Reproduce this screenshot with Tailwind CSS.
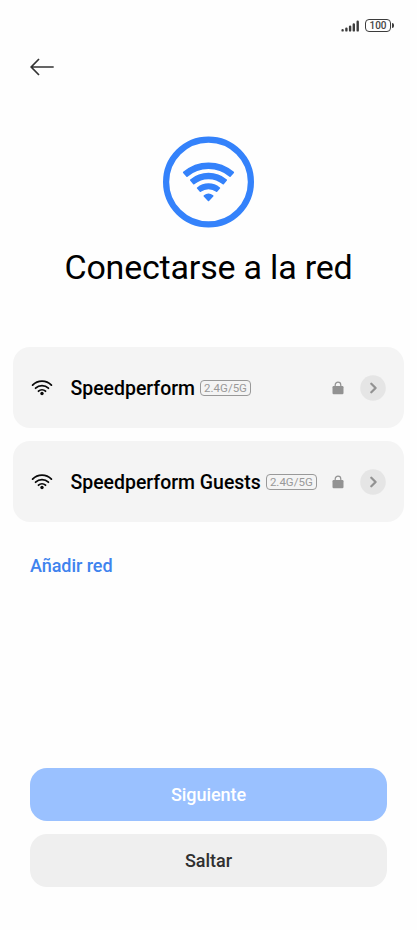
<!DOCTYPE html>
<html lang="es">
<head>
<meta charset="utf-8">
<title>Conectarse a la red</title>
<script src="https://cdn.jsdelivr.net/npm/@tailwindcss/browser@4"></script>
</head>
<body class="bg-[#fefefe] font-[Roboto,sans-serif]">
<svg class="hidden">
  <symbol id="wifi" viewBox="0 0 22 16">
    <g fill="none" stroke="#0a0a0a" stroke-width="1.8" stroke-linecap="round"><path d="M1.6 5.1A13 13 0 0 1 20.4 5.1"/><path d="M4.6 8.2A9.2 9.2 0 0 1 17.4 8.2"/><path d="M7.5 11.2A5.2 5.2 0 0 1 14.5 11.2"/></g>
    <circle cx="11" cy="13.5" r="1.7" fill="#0a0a0a"/>
  </symbol>
  <symbol id="lock" viewBox="0 0 12 14">
    <path d="M3.2 6V4a2.8 2.8 0 0 1 5.6 0v2" fill="none" stroke="#929292" stroke-width="1.2"/>
    <rect x=".5" y="5" width="11" height="8.2" rx="1.2" fill="#929292"/>
  </symbol>
  <symbol id="chevron" viewBox="0 0 26 26">
    <circle cx="13" cy="13" r="12.8" fill="#e5e5e5"/>
    <path d="M11.3 8.8L15.6 13L11.3 17.2" fill="none" stroke="#929292" stroke-width="2.3" stroke-linecap="round" stroke-linejoin="round"/>
  </symbol>
</svg>
<div class="flex flex-col w-[417px] h-[930px] overflow-hidden">
  <header class="flex flex-col h-[136px] shrink-0">
    <div class="flex justify-end items-center gap-[5px] h-[34px] pt-[17px] pr-[26px]">
      <svg class="w-[19px] h-[12px]" viewBox="0 0 19 12" fill="none" stroke="#3c3c3c" stroke-width="2.4" stroke-linecap="round"><path d="M1.6 10.2v.2M5.4 8.6v1.8M9.1 6.6v3.8M12.8 4.4v6M16.7 1.7v8.7"/></svg>
      <div class="relative flex items-center justify-center w-[26px] h-[13px] rounded-[4px] border-[1.5px] border-[#3c3c3c] text-[10px] font-medium leading-none text-[#444]">100<span class="absolute -right-[4px] top-[3px] w-[2px] h-[5px] rounded-r bg-[#3c3c3c]"></span></div>
    </div>
    <svg class="ml-[29px] mt-[23px] w-[26px] h-[20px]" viewBox="0 0 26 20" fill="none" stroke="#333" stroke-width="1.7"><path d="M2.2 10H24.7M10 2L2.2 10L10 18"/></svg>
  </header>
  <svg class="ml-[162px] w-[93px] h-[92px] shrink-0" viewBox="-46.5 -46 93 92">
    <circle r="42.4" fill="none" stroke="#3482fb" stroke-width="6.2"/>
    <g transform="translate(0 19.6)" fill="#3482fb" stroke="#3482fb" stroke-width="1.6" stroke-linejoin="round">
      <path d="M-24.8-29.2A38 38 0 0 1 24.8-29.2L21.5-25.5A33.3 33.3 0 0 0-21.5-25.5Z"/>
      <path d="M-17.8-21.6A28 28 0 0 1 17.8-21.6L14.7-17.9A23 23 0 0 0-14.7-17.9Z"/>
      <path d="M-10.9-13.6A17.4 17.4 0 0 1 10.9-13.6L8.1-10.5A13.3 13.3 0 0 0-8.1-10.5Z"/>
      <path d="M-4.2-5.6A7 7 0 0 1 4.2-5.6L0-1.2Z"/>
    </g>
  </svg>
  <h1 class="mt-[19px] h-[42px] leading-[41px] text-center text-[34px] tracking-[-0.2px] text-black whitespace-nowrap"><span>Conectarse a la red</span></h1>
  <main class="flex flex-col gap-[13px] pl-[13px] pr-[13px] mt-[58px]">
    <div class="flex items-center h-[81px] rounded-[17px] bg-[#f4f4f4] pl-[18px] pr-[18px]">
      <svg class="w-[22px] h-[16px]"><use href="#wifi"/></svg>
      <span class="ml-[17.5px] pt-[2px] text-[19.45px] font-medium leading-6 text-black whitespace-nowrap">Speedperform</span>
      <span class="ml-[5px] w-[51px] h-[16px] rounded-[4px] border border-[#999] text-[11.5px] leading-[14px] text-center text-[#999]">2.4G/5G</span>
      <svg class="ml-auto w-[12px] h-[14px]"><use href="#lock"/></svg>
      <svg class="ml-[16.5px] w-[26px] h-[26px]"><use href="#chevron"/></svg>
    </div>
    <div class="flex items-center h-[81px] rounded-[17px] bg-[#f4f4f4] pl-[18px] pr-[18px]">
      <svg class="w-[22px] h-[16px]"><use href="#wifi"/></svg>
      <span class="ml-[17.5px] pt-[2px] text-[19.45px] font-medium leading-6 text-black whitespace-nowrap">Speedperform Guests</span>
      <span class="ml-[5px] w-[51px] h-[16px] rounded-[4px] border border-[#999] text-[11.5px] leading-[14px] text-center text-[#999]">2.4G/5G</span>
      <svg class="ml-auto w-[12px] h-[14px]"><use href="#lock"/></svg>
      <svg class="ml-[16.5px] w-[26px] h-[26px]"><use href="#chevron"/></svg>
    </div>
  </main>
  <a class="ml-[30px] mt-[32px] leading-6 text-[18px] tracking-[-0.05px] font-medium text-[#3f83ee]">Añadir red</a>
  <footer class="flex flex-col gap-[13px] mt-auto mb-[43px] px-[30px]">
    <button class="h-[53px] rounded-[17px] bg-[#9ac1ff] text-[18px] tracking-[-0.05px] font-medium text-white">Siguiente</button>
    <button class="h-[53px] rounded-[17px] bg-[#efefef] text-[18px] font-medium text-[#303030]">Saltar</button>
  </footer>
</div>
</body>
</html>
